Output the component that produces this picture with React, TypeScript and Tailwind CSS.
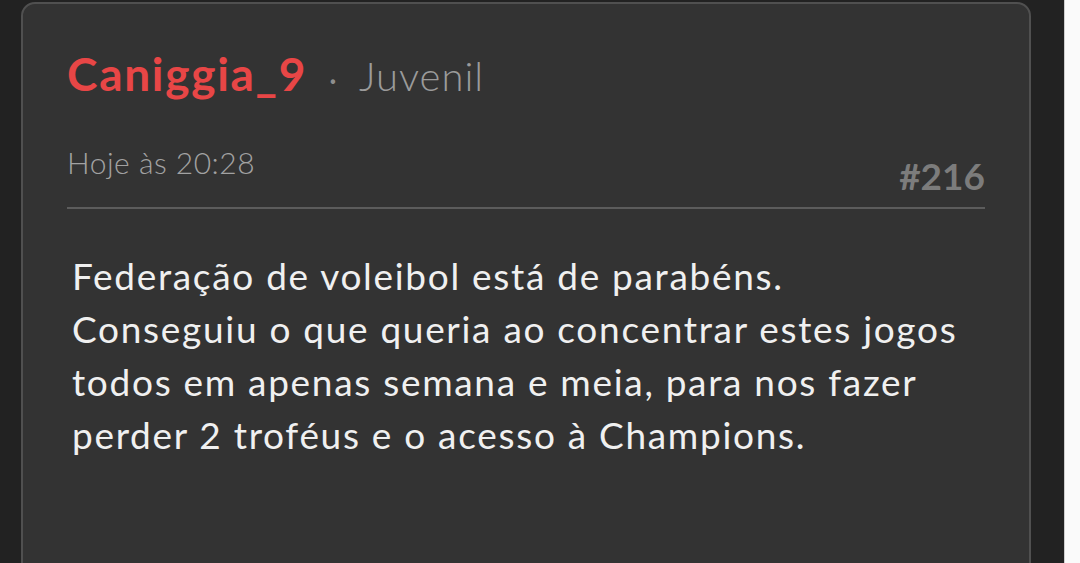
import React from 'react';

// --- Post data ---
const post = {
  author: 'Caniggia_9',
  rank: 'Juvenil',
  time: 'Hoje às 20:28',
  number: '#216',
  lines: [
    'Federação de voleibol está de parabéns.',
    'Conseguiu o que queria ao concentrar estes jogos',
    'todos em apenas semana e meia, para nos fazer',
    'perder 2 troféus e o acesso à Champions.',
  ],
};

export default function App() {
  return (
    <div className="flex h-[563px] w-[1080px] overflow-hidden bg-[#222222] font-['Lato',sans-serif]">
      <div className="flex-1 pl-[21px] pr-[33px] pt-[2px]">
        {/* Post card */}
        <div className="h-[640px] rounded-[14px] border-2 border-[#505050] bg-[#333333] px-[44px] pt-[42px]">
          <div className="flex items-baseline">
            <span className="text-[46px] font-bold leading-[56px] tracking-[1.7px] text-[#e84646]">{post.author}</span>
            <span className="ml-[22px] text-[30px] text-[#8e8e8e]">·</span>
            <span className="ml-[22px] text-[40px] font-light tracking-[1px] text-[#9b9b9b]">{post.rank}</span>
          </div>

          <div className="mt-[38px] flex items-start justify-between">
            <span className="text-[30px] font-light leading-[36px] tracking-[0.5px] text-[#a2a2a2]">{post.time}</span>
            <span className="mt-[10px] text-[37px] font-bold leading-[44px] text-[#7c7c7c]">{post.number}</span>
          </div>

          <div className="mt-[9px] h-[2px] bg-[#5c5c5c]" />

          <div className="mt-[40px] pl-[5px] text-[37px] font-normal leading-[53px] tracking-[1.7px] text-[#f0f0f0]">
            {post.lines.map((l, i) => (
              <div key={i} className="whitespace-nowrap">{l}</div>
            ))}
          </div>
        </div>
      </div>
      {/* right edge strip */}
      <div className="w-[16px] border-l border-[#cfcfcf] bg-[#fafafa]" />
    </div>
  );
}
